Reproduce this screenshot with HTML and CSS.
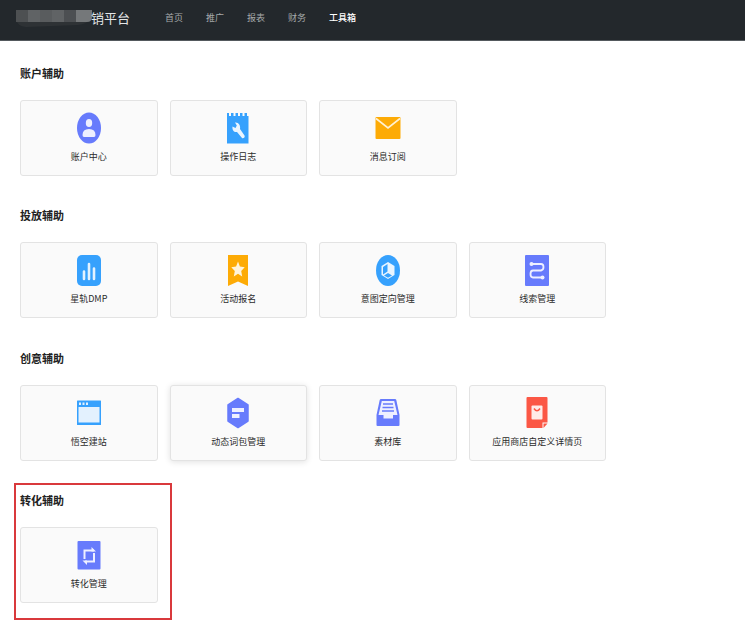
FILE: index.html
```html
<!DOCTYPE html>
<html lang="zh-CN">
<head>
<meta charset="utf-8">
<meta name="viewport" content="width=device-width, initial-scale=1">
<title>工具箱</title>
<link rel="stylesheet" href="styles.css">
</head>
<body>
<header class="topbar">
  <div class="brand">
    <svg class="brand-mask" viewBox="0 0 77 17" aria-hidden="true">
      <path d="M0 9h74q-3 5-12 6L10 17Q1 16 0 9z" fill="#2e3235"/>
      <path d="M0 0h12v12H0z" fill="#4d5052"/>
      <path d="M12 0h12v12H12z" fill="#606365"/>
      <path d="M24 0h12v12H24z" fill="#595c5e"/>
      <path d="M36 0h12v12H36z" fill="#606365"/>
      <path d="M48 0h12v12H48z" fill="#4c4f52"/>
      <path d="M60 0h16v7q0 5-5 5H60z" fill="#75787a"/>
    </svg>
    <span>销平台</span>
  </div>
  <nav class="nav">
    <a href="#">首页</a>
    <a href="#">推广</a>
    <a href="#">报表</a>
    <a href="#">财务</a>
    <a href="#" class="active" aria-current="page">工具箱</a>
  </nav>
</header>
<main class="tools">
  <section class="group">
    <h2>账户辅助</h2>
    <div class="cards">
      <a class="card" href="#">
        <svg class="icon" viewBox="0 0 26 32" aria-hidden="true"><ellipse cx="13" cy="16" rx="12" ry="15.5" fill="#677bfc"/><ellipse cx="13" cy="11" rx="3.2" ry="4" fill="#eef0ff"/><path d="M6.5 23q0-6 6.500-6t6.500 6q0 2-1.500 2H8q-1.500 0-1.500-2z" fill="#eef0ff"/></svg>
        <span>账户中心</span>
      </a>
      <a class="card" href="#">
        <svg class="icon" viewBox="0 0 26 32" aria-hidden="true"><path d="M2 1h2v3h2V1h2.500v3h2V1H13v3h2V1h2.500v3h2V1H22v3h1.500v27.500H2z" fill="#36a1fd"/><path d="M10 10.500l1.800 3-1.300 2.500-3-1.500c-.5 3.500 1.500 6 4.500 5.500l5 6c1 1.200 3.500-.8 2.500-2.500L15 17c.8-3.500-1.500-7-5-6.500z" fill="#eaf5ff"/></svg>
        <span>操作日志</span>
      </a>
      <a class="card" href="#">
        <svg class="icon" viewBox="0 0 26 32" aria-hidden="true"><rect x=".5" y="5" width="25" height="22" rx="1" fill="#fdab06"/><path d="M1 6.500l12 9.500 12-9.500" fill="none" stroke="#fff1d2" stroke-width="1.600"/></svg>
        <span>消息订阅</span>
      </a>
    </div>
  </section>
  <section class="group">
    <h2>投放辅助</h2>
    <div class="cards">
      <a class="card" href="#">
        <svg class="icon" viewBox="0 0 26 32" aria-hidden="true"><rect x="1" y="1" width="24" height="31" rx="5" fill="#36a1fd"/><path d="M8 17.500v7.500M13 10v15M18 14.500V25" fill="none" stroke="#e4f2ff" stroke-width="2.600" stroke-linecap="round"/></svg>
        <span>星轨DMP</span>
      </a>
      <a class="card" href="#">
        <svg class="icon" viewBox="0 0 26 32" aria-hidden="true"><path d="M3 1h20v31l-10-4.500L3 32z" fill="#fdab06"/><path d="M13 7.500l1.900 5 4.800.7-3.500 3.800 1 5.500-4.200-2.700L8.800 22.500l1-5.500-3.500-3.800 4.800-.7z" fill="#fff4dc"/></svg>
        <span>活动报名</span>
      </a>
      <a class="card" href="#">
        <svg class="icon" viewBox="0 0 26 32" aria-hidden="true"><ellipse cx="13" cy="16.500" rx="12" ry="15.500" fill="#36a1fd"/><path d="M13 8l6.500 4v9L13 25l-6.500-4v-9z" fill="#e9f5ff"/><path d="M12.500 10v7.500L8 20.500V13zM13 19l4 2.500-4 2.300-4-2.300z" fill="#36a1fd"/></svg>
        <span>意图定向管理</span>
      </a>
      <a class="card" href="#">
        <svg class="icon" viewBox="0 0 26 32" aria-hidden="true"><rect x="1" y="1" width="24" height="31" rx="1" fill="#677bfc"/><path d="M8 10h9q2.500 0 2.500 3t-2.500 3.500H9q-2.500 0-2.500 3.500T9 23.500h9" fill="none" stroke="#eef0ff" stroke-width="1.800"/><circle cx="7.500" cy="10" r="2" fill="#eef0ff"/><circle cx="18.500" cy="23.500" r="2" fill="#eef0ff"/></svg>
        <span>线索管理</span>
      </a>
    </div>
  </section>
  <section class="group">
    <h2>创意辅助</h2>
    <div class="cards">
      <a class="card" href="#">
        <svg class="icon" viewBox="0 0 26 32" aria-hidden="true"><rect x="1" y="3.500" width="24" height="24.500" rx=".5" fill="#36a1fd"/><path d="M2.500 10h21v15.500h-21z" fill="#e3f1fe"/><path d="M3 5.500h2v2.500H3zM6.500 5.500h2v2.500h-2zM10 5.500h2v2.500h-2z" fill="#e3f1fe"/></svg>
        <span>悟空建站</span>
      </a>
      <a class="card raised" href="#">
        <svg class="icon" viewBox="0 0 26 32" aria-hidden="true"><path d="M13 1.500L23 8v16L13 30.500 3 24V8z" fill="#677bfc" stroke="#677bfc" stroke-width="1.500" stroke-linejoin="round"/><path d="M7 11h12v4H7zM7 17h7.500v4H7z" fill="#eef0ff"/></svg>
        <span>动态词包管理</span>
      </a>
      <a class="card" href="#">
        <svg class="icon" viewBox="0 0 26 32" aria-hidden="true"><path d="M6 2h14q1 0 1.300 1L24.500 18v10q0 1-1 1h-21q-1 0-1-1V18L4.700 3Q5 2 6 2z" fill="#677bfc"/><path d="M6.800 4h12.400l3.300 14H18v3.500H8.500V18H3.500z" fill="#eef0ff"/><path d="M8 7h10M7.500 10.500h11M7 14h12" stroke="#677bfc" stroke-width="1.500"/></svg>
        <span>素材库</span>
      </a>
      <a class="card" href="#">
        <svg class="icon" viewBox="0 0 26 32" aria-hidden="true"><path d="M3.500 0h19q1 0 1 1v24.500h-5V31h-15q-1 0-1-1V1q0-1 1-1z" fill="#fb5745"/><path d="M19.500 26.500h4l-4 4.500z" fill="#fb5745"/><rect x="7.500" y="8.500" width="11" height="14" rx="1" fill="#ffebe8"/><path d="M10 11.500q3 4.500 6 0" fill="none" stroke="#fb5745" stroke-width="1.500"/></svg>
        <span>应用商店自定义详情页</span>
      </a>
    </div>
  </section>
  <section class="group marked">
    <h2>转化辅助</h2>
    <div class="cards">
      <a class="card" href="#">
        <svg class="icon" viewBox="0 0 26 32" aria-hidden="true"><rect x="1.500" y="2" width="23" height="28.500" rx="1" fill="#677bfc"/><path d="M8.500 20V11.500H18M18 14v8.500H9" fill="none" stroke="#eef0ff" stroke-width="2"/><path d="M15.500 8l4.500 4.500h-4.500zM11 26l-4.500-4.500H11z" fill="#eef0ff"/></svg>
        <span>转化管理</span>
      </a>
    </div>
  </section>
</main>
</body>
</html>
```
FILE: styles.css
```css
*,
*::after {
  box-sizing: border-box;
}

body {
  margin: 0;
  min-height: 100vh;
  display: flex;
  flex-direction: column;
  background: #fff;
  color: #2b2b2b;
  font-family: "Noto Sans CJK SC", sans-serif;
}

a {
  color: inherit;
  text-decoration: none;
}

.topbar {
  height: 41px;
  padding: 0 16px 4px;
  display: flex;
  align-items: center;
  gap: 35px;
  background: #23282c;
  border-bottom: 1px solid #54595d;
}

.brand {
  display: flex;
  align-items: center;
  color: #e4e6e7;
  font-size: 13px;
  line-height: 20px;
}

.brand-mask {
  width: 77px;
  height: 17px;
  margin-right: -2px;
}

.nav {
  display: flex;
  gap: 23px;
  color: #a5a8aa;
  font-size: 9px;
  line-height: 16px;
}

.nav .active {
  color: #fff;
  font-weight: 500;
}

.tools {
  flex: 1;
  padding: 24px 20px 26px;
  display: flex;
  flex-direction: column;
  justify-content: space-between;
}

.group {
  position: relative;
}

.group h2 {
  margin: 0 0 19px;
  color: #222;
  font-size: 11px;
  line-height: 16px;
  font-weight: 700;
}

.cards {
  max-width: 586px;
  display: grid;
  grid-template-columns: repeat(4, 1fr);
  gap: 12px;
}

.card {
  height: 76px;
  padding-top: 11px;
  display: flex;
  flex-direction: column;
  align-items: center;
  gap: 6px;
  background: #fafafa;
  border: 1px solid #e3e3e3;
  border-radius: 3px;
  font-size: 9px;
  line-height: 14px;
  white-space: nowrap;
}

.card.raised {
  box-shadow: 0 1px 6px rgba(0, 0, 0, 0.12);
}

.icon {
  width: 26px;
  height: 32px;
}

.marked::after {
  content: "";
  position: absolute;
  top: -9px;
  bottom: -17px;
  left: -6px;
  width: 158px;
  border: 2px solid #d9393c;
  pointer-events: none;
}
```
